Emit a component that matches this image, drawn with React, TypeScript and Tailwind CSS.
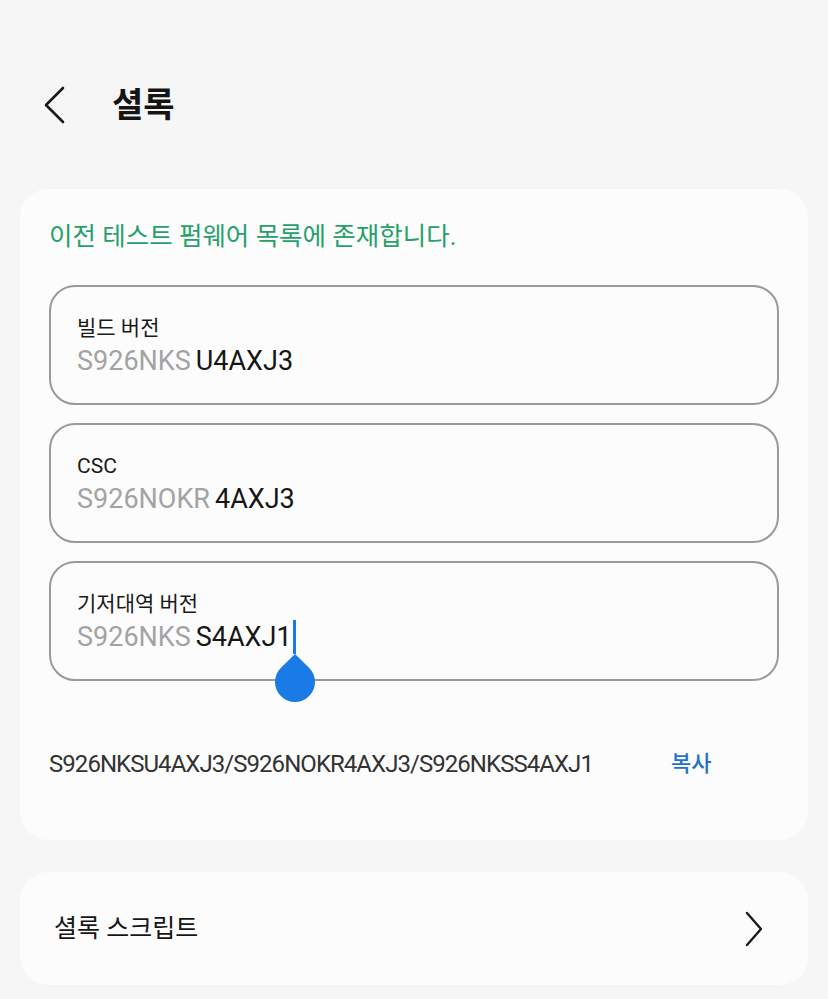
import React from "react"

const font = { fontFamily: 'Roboto, "Noto Sans CJK KR", sans-serif' }

const Field: React.FC<{ label: string; prefix: string; value: string; cursor?: boolean }> = ({
  label,
  prefix,
  value,
  cursor,
}) => {
  return (
    <div className="flex h-[120px] flex-col rounded-[26px] border-2 border-[#9a9a9a] px-[26px] pt-[27px]">
      <div className="text-[21px] leading-[28px] text-[#1a1a1a]">{label}</div>
      <div className="mt-[2px] flex items-center text-[27px] leading-[34px]">
        <span className="text-[#a3a3a3]">{prefix}</span>
        <span className="ml-[5px] text-[#161616]">{value}</span>
        {cursor && (
          <span className="relative ml-[1px] inline-block h-[34px] w-[3px] bg-[#1a7be6]">
            <span className="absolute top-[34px] left-[-18px] h-[48px] w-[40px]">
              <svg viewBox="0 0 40 48" width="40" height="48">
                <path d="M20 0 L34 13.7 A20 20 0 1 1 6 13.7 Z" fill="#1a7be6" />
              </svg>
            </span>
          </span>
        )}
      </div>
    </div>
  )
}

const App: React.FC = () => {
  return (
    <div className="min-h-[999px] w-[828px] bg-[#f6f6f6]" style={font}>
      <div className="flex h-[189px] items-start pt-[84px]">
        <div className="ml-[42px] flex h-[42px] w-[26px] items-center">
          <svg width="24" height="40" viewBox="0 0 24 40" fill="none">
            <path d="M21 3 L4 20 L21 37" stroke="#1a1a1a" strokeWidth="2.6" strokeLinecap="round" strokeLinejoin="round" />
          </svg>
        </div>
        <div className="ml-[44px] text-[34px] leading-[42px] font-bold text-[#141414]">셜록</div>
      </div>

      <div className="mx-[20px] rounded-[28px] bg-[#fcfcfc] px-[29px] pt-[31px] pb-[60px]">
        <div className="text-[25.5px] leading-[32px] text-[#27a06b]">이전 테스트 펌웨어 목록에 존재합니다.</div>
        <div className="mt-[33px] flex flex-col gap-[18px]">
          <Field label="빌드 버전" prefix="S926NKS" value="U4AXJ3" />
          <Field label="CSC" prefix="S926NOKR" value="4AXJ3" />
          <Field label="기저대역 버전" prefix="S926NKS" value="S4AXJ1" cursor />
        </div>
        <div className="mt-[67px] flex items-center">
          <span className="w-[622px] text-[24px] leading-[32px] tracking-[-0.95px] text-[#333333]">
            S926NKSU4AXJ3/S926NOKR4AXJ3/S926NKSS4AXJ1
          </span>
          <span className="text-[22px] leading-[32px] font-medium text-[#1f74c9]">복사</span>
        </div>
      </div>

      <div className="mx-[20px] mt-[32px] flex h-[113px] items-center justify-between rounded-[28px] bg-[#fcfcfc] pr-[44px] pl-[34px]">
        <span className="text-[25px] leading-[32px] text-[#161616]">셜록 스크립트</span>
        <svg width="20" height="36" viewBox="0 0 20 36" fill="none">
          <path d="M3 2 L17 18 L3 34" stroke="#1a1a1a" strokeWidth="2.4" strokeLinecap="round" strokeLinejoin="round" />
        </svg>
      </div>
    </div>
  )
}

export default App
